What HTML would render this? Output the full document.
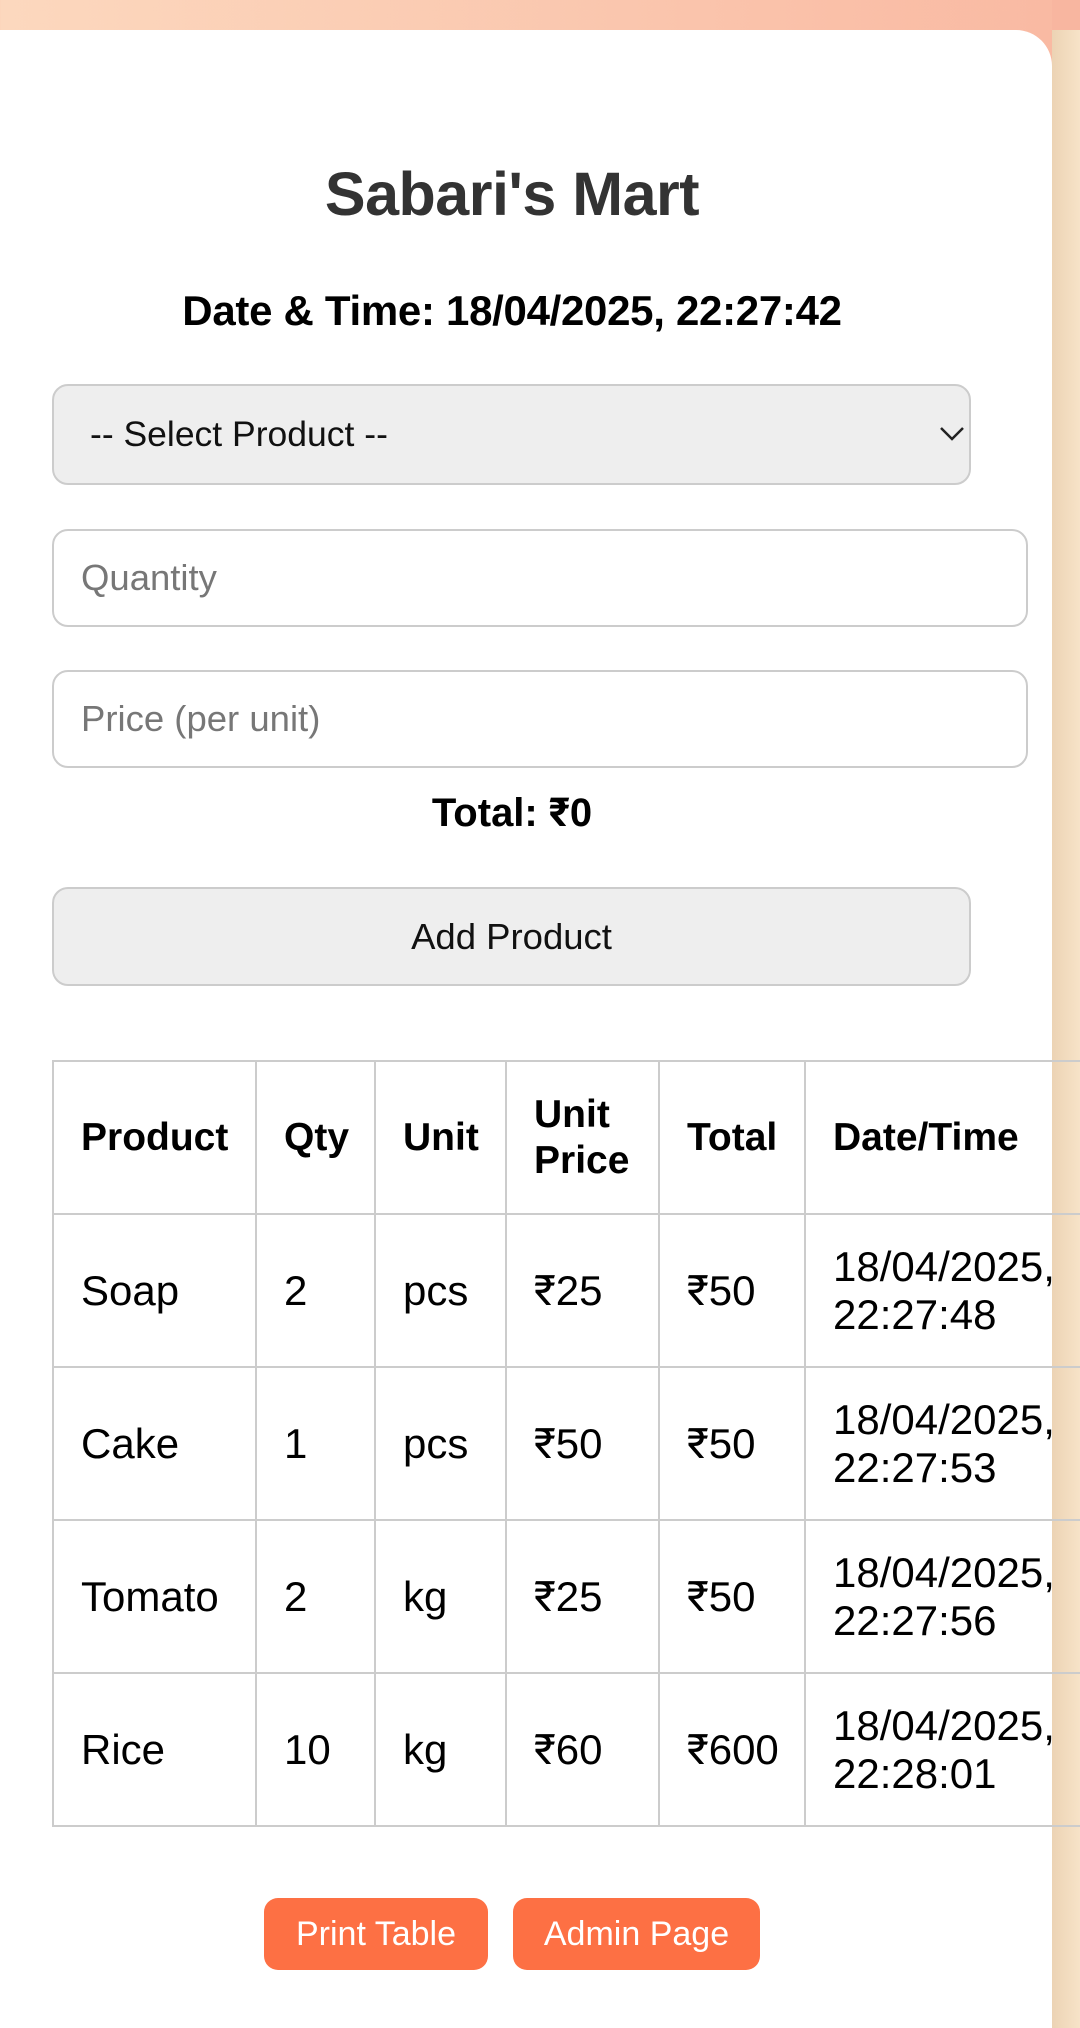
<!DOCTYPE html>
<html><head><meta charset="utf-8"><style>
*{box-sizing:border-box;margin:0;padding:0}
html,body{width:1080px;height:2028px;overflow:hidden}
body{background:linear-gradient(90deg,#fcd8be 0%,#f9b9a2 100%);font-family:"Liberation Sans",Roboto,sans-serif;position:relative}
.strip{position:absolute;left:1052px;top:0;width:28px;height:2028px;background:linear-gradient(90deg,#ecd3b4,#f7e3c8)}
.strip2{position:absolute;left:1052px;top:0;width:28px;height:30px;background:#f8b6a0}
.card{position:absolute;left:0;top:30px;width:1052px;height:1998px;background:#fff;border-radius:0 36px 0 0}
.abs{position:absolute}
h1{position:absolute;left:0;width:1024px;top:164px;text-align:center;font-size:61px;font-weight:bold;color:#333;line-height:1;letter-spacing:-0.5px}
.dt{position:absolute;left:0;width:1024px;top:290px;text-align:center;font-size:42px;font-weight:bold;color:#000;line-height:1;letter-spacing:-0.3px}
.sel{position:absolute;left:52px;top:384px;width:919px;height:101px;background:#eee;border:2px solid #ccc;border-radius:16px;font-size:35.5px;color:#111;padding-left:36px;line-height:97px}
.inp{position:absolute;left:52px;width:976px;height:98px;border:2px solid #ccc;border-radius:16px;font-size:36.5px;color:#777;padding-left:27px;line-height:94px}
.tot{position:absolute;left:0;width:1024px;top:793px;text-align:center;font-size:40px;font-weight:bold;line-height:1}
.btn{position:absolute;left:52px;top:887px;width:919px;height:99px;background:#eee;border:2px solid #ccc;border-radius:16px;font-size:36.5px;text-align:center;line-height:95px;color:#111}
table{position:absolute;left:52px;top:1060px;border-collapse:collapse;table-layout:fixed;width:1060px}
td,th{border:2px solid #ccc;padding:0 0 0 27px;font-size:42px;text-align:left;vertical-align:middle;line-height:48px;color:#000;white-space:nowrap}
th{height:153px;font-weight:bold;font-size:39px;line-height:46px}
td{height:153px}
.ob{position:absolute;top:1898px;height:72px;background:#fd7044;color:#fff;border-radius:14px;font-size:34px;text-align:center;line-height:72px}
</style></head><body>
<div class="strip"></div><div class="strip2"></div>
<div class="card"></div>
<h1>Sabari's Mart</h1>
<div class="dt">Date &amp; Time: 18/04/2025, 22:27:42</div>
<div class="sel">-- Select Product --
<svg class="abs" style="left:885px;top:40px" width="26" height="16" viewBox="0 0 26 16"><path d="M2 2 L13 13 L24 2" fill="none" stroke="#222" stroke-width="2.5"/></svg></div>
<div class="inp" style="top:529px">Quantity</div>
<div class="inp" style="top:670px">Price (per unit)</div>
<div class="tot">Total: ₹0</div>
<div class="btn">Add Product</div>
<table>
<colgroup><col style="width:203px"><col style="width:119px"><col style="width:131px"><col style="width:153px"><col style="width:146px"><col style="width:308px"></colgroup>
<tr><th>Product</th><th>Qty</th><th>Unit</th><th>Unit<br>Price</th><th>Total</th><th>Date/Time</th></tr>
<tr><td>Soap</td><td>2</td><td>pcs</td><td>₹25</td><td>₹50</td><td>18/04/2025,<br>22:27:48</td></tr>
<tr><td>Cake</td><td>1</td><td>pcs</td><td>₹50</td><td>₹50</td><td>18/04/2025,<br>22:27:53</td></tr>
<tr><td>Tomato</td><td>2</td><td>kg</td><td>₹25</td><td>₹50</td><td>18/04/2025,<br>22:27:56</td></tr>
<tr><td>Rice</td><td>10</td><td>kg</td><td>₹60</td><td>₹600</td><td>18/04/2025,<br>22:28:01</td></tr>
</table>
<div class="ob" style="left:264px;width:224px">Print Table</div>
<div class="ob" style="left:513px;width:247px">Admin Page</div>
</body></html>
